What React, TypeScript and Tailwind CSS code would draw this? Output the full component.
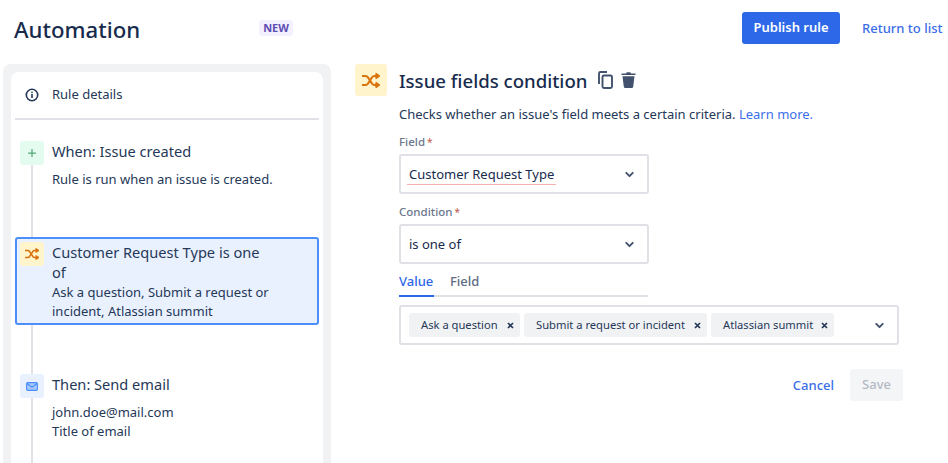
import type { ReactNode } from 'react';
import { Plus, ChevronDown } from 'lucide-react';

function ShuffleIcon({ width, height, strokeWidth }: { width: number; height: number; strokeWidth: number }) {
  return (
    <svg width={width} height={height} viewBox="0 0 18 15" fill="none" stroke="#d9730d" strokeWidth={strokeWidth} className="shrink-0">
      <path d="M0 3h3.5c1.2 0 1.9 0.6 2.5 1.4l4 6.2c0.6 0.8 1.3 1.4 2.5 1.4H17" />
      <path d="M0 12h3.5c1.2 0 1.9-0.6 2.5-1.4l4-6.2C10.6 3.6 11.3 3 12.5 3H17" />
      <path d="M13.5 0.5L17 3l-3.5 2.5M13.5 9.5L17 12l-3.5 2.5" />
    </svg>
  );
}

function InfoIcon() {
  return (
    <svg width={14} height={14} viewBox="0 0 14 14" className="shrink-0">
      <circle cx={7} cy={7} r={5.7} fill="none" stroke="#253858" strokeWidth={1.6} />
      <rect x={6.2} y={6} width={1.6} height={4} fill="#253858" />
      <rect x={6.2} y={3.6} width={1.6} height={1.6} rx={0.8} fill="#253858" />
    </svg>
  );
}

function MailIcon() {
  return (
    <svg width={12} height={9} viewBox="0 0 12 9">
      <rect x={0.6} y={0.6} width={10.8} height={7.8} rx={1.2} fill="#a9c8ff" stroke="#4c8ffa" strokeWidth={1.2} />
      <path d="M1 1.5l5 3.7 5-3.7" fill="none" stroke="#4c8ffa" strokeWidth={1.2} />
    </svg>
  );
}

function CopyIcon() {
  return (
    <svg width={15} height={18} viewBox="0 0 15 18" className="shrink-0">
      <path d="M1 13V2.5A1.5 1.5 0 0 1 2.5 1H9" fill="none" stroke="#42526e" strokeWidth={1.9} />
      <rect x={4.5} y={4.5} width={9.5} height={12.5} rx={1.5} fill="none" stroke="#42526e" strokeWidth={1.9} />
    </svg>
  );
}

function TrashIcon() {
  return (
    <svg width={15} height={16} viewBox="0 0 15 16" className="shrink-0">
      <path d="M0.5 1.5h4.5L5.8 0.3h3.4l0.8 1.2h4.5V3H0.5z" fill="#42526e" />
      <path d="M1.5 4.2h12l-1.3 10.5a1.5 1.5 0 0 1-1.5 1.3H4.3a1.5 1.5 0 0 1-1.5-1.3z" fill="#42526e" />
    </svg>
  );
}

function TagX() {
  return (
    <svg width={7} height={7} viewBox="0 0 7 7" className="shrink-0">
      <path d="M1 1l5 5M6 1L1 6" stroke="#253858" strokeWidth={1.7} />
    </svg>
  );
}

function Tag({ label, className }: { label: string; className: string }) {
  return (
    <div className={`flex items-center justify-between h-6 pl-3 pr-[6px] bg-[#f1f2f4] rounded-[3px] text-[11.2px] text-[#253858] ${className}`}>
      <span className="whitespace-nowrap">{label}</span>
      <TagX />
    </div>
  );
}

function FieldLabel({ children }: { children: ReactNode }) {
  return (
    <div className="h-4 flex items-center gap-0.5 text-[11.5px] font-medium text-[#6b778c]">
      {children}
      <span className="text-[10px] font-normal text-[#bf5a4a]">*</span>
    </div>
  );
}

function SelectBox({ children }: { children: ReactNode }) {
  return (
    <div className="flex items-center justify-between w-[250px] h-10 mt-1 pt-px pl-2 pr-[11px] border-2 border-[#dfe1e6] rounded-[3px] text-[13px] text-[#172b4d]">
      {children}
      <ChevronDown size={13} strokeWidth={3.5} className="text-[#42526e]" />
    </div>
  );
}

function StepIcon({ bg, children }: { bg: string; children: ReactNode }) {
  return <div className={`flex items-center justify-center w-6 h-6 rounded-[3px] shrink-0 ${bg}`}>{children}</div>;
}

export default function App() {
  return (
    <div className="flex flex-col w-[948px] h-[463px] overflow-hidden bg-white font-['Noto_Sans',sans-serif] text-[#172b4d]">
      <header className="flex items-center h-16 shrink-0 pl-[14px] pb-[8px]">
        <h1 className="w-[245px] mt-1 text-[22.2px] font-medium leading-7 text-[#172b4d]">Automation</h1>
        <span className="flex items-center justify-center w-[34px] h-4 rounded-[3px] bg-[#f3f0ff] text-[11px] font-bold text-[#5e4db2]">NEW</span>
        <button className="ml-[449px] w-[98px] h-8 rounded-[3px] bg-[#2d68e8] text-[13px] font-semibold text-white whitespace-nowrap">Publish rule</button>
        <a className="ml-[22px] pt-px text-[13px] font-medium text-[#3b6ee8] whitespace-nowrap">Return to list</a>
      </header>

      <main className="flex flex-1 min-h-0 pl-[3px]">
        <aside className="w-[328px] shrink-0 bg-[#f1f2f4] rounded-t-[8px] pt-2 px-2">
          <div className="relative h-full bg-white rounded-t-[8px] px-1 overflow-hidden">
            <div className="flex items-center gap-[13px] h-12 pl-[10px] border-b-2 border-[#dfe1e6] text-[13px] text-[#253858]">
              <InfoIcon />
              Rule details
            </div>

            <div className="absolute left-[20px] top-[92px] bottom-0 w-0.5 bg-[#dfe1e6]" />

            <div className="relative flex gap-2 pl-[5px] mt-[21px] h-[96px]">
              <StepIcon bg="bg-[#e3fcef]">
                <Plus size={12} strokeWidth={2.5} className="text-[#57a67e]" />
              </StepIcon>
              <div>
                <div className="text-[14.6px] leading-5 text-[#253858]">When: Issue created</div>
                <div className="mt-[9px] text-[13px] leading-[19px] text-[#253858]">Rule is run when an issue is created.</div>
              </div>
            </div>

            <div className="relative flex gap-2 h-[88px] pl-[3px] pt-[3px] border-2 border-[#4c8ffa] rounded-[3px] bg-[#e9f1ff]">
              <StepIcon bg="bg-[#fff4cc]">
                <ShuffleIcon width={14} height={12} strokeWidth={2} />
              </StepIcon>
              <div className="w-[222px] pt-px">
                <div className="text-[14.6px] leading-[19.5px] text-[#253858]">Customer Request Type is one of</div>
                <div className="mt-px text-[13px] leading-[19px] text-[#253858]">Ask a question, Submit a request or incident, Atlassian summit</div>
              </div>
            </div>

            <div className="relative flex gap-2 pl-[5px] mt-[49px]">
              <StepIcon bg="bg-[#e9f1ff]">
                <MailIcon />
              </StepIcon>
              <div>
                <div className="text-[14.6px] leading-5 text-[#253858]">Then: Send email</div>
                <div className="mt-[9px] text-[13px] leading-[19px] text-[#253858]">john.doe@mail.com</div>
                <div className="text-[13px] leading-[19px] text-[#253858]">Title of email</div>
              </div>
            </div>
          </div>
        </aside>

        <section className="flex-1 min-w-0 pl-6">
          <div className="flex items-center h-8">
            <div className="flex items-center justify-center w-8 h-8 mr-3 rounded-[3px] bg-[#fff4cc]">
              <ShuffleIcon width={18} height={15} strokeWidth={2} />
            </div>
            <h2 className="mt-0.5 mr-[11px] text-[18.6px] font-medium text-[#172b4d] whitespace-nowrap">Issue fields condition</h2>
            <CopyIcon />
            <div className="w-2" />
            <TrashIcon />
          </div>

          <div className="pl-11">
            <p className="mt-[9px] h-[18px] leading-[18px] text-[13px] text-[#253858] whitespace-nowrap">
              Checks whether an issue's field meets a certain criteria. <a className="text-[#3b6ee8]">Learn more.</a>
            </p>

            <div className="mt-[11px]">
              <FieldLabel>Field</FieldLabel>
              <SelectBox>
                <span className="-mx-0.5 px-0.5 border-b border-[#f4b0b0] leading-[19px]">Customer Request Type</span>
              </SelectBox>
            </div>

            <div className="mt-[10px]">
              <FieldLabel>Condition</FieldLabel>
              <SelectBox>is one of</SelectBox>
            </div>

            <div className="flex w-[249px] h-[33px] border-b-2 border-[#dfe1e6] text-[13px] font-medium">
              <div className="relative w-[35px] pt-2 text-[#2d68e8]">
                Value
                <div className="absolute left-0 right-0 -bottom-0.5 h-0.5 bg-[#2d68e8]" />
              </div>
              <div className="ml-[16px] pt-2 text-[#5e6c84]">Field</div>
            </div>

            <div className="flex items-center w-[500px] h-10 mt-2 pl-2 pr-[11px] border-2 border-[#dfe1e6] rounded-[3px]">
              <Tag label="Ask a question" className="w-[111px]" />
              <Tag label="Submit a request or incident" className="w-[183px] ml-1" />
              <Tag label="Atlassian summit" className="w-[123px] ml-1" />
              <ChevronDown size={13} strokeWidth={3.5} className="ml-auto text-[#42526e]" />
            </div>

            <div className="flex items-center justify-end w-[504px] mt-6 gap-4">
              <a className="pt-0.5 text-[13px] font-medium text-[#3b6ee8]">Cancel</a>
              <button className="w-[53px] h-8 rounded-[3px] bg-[#f4f5f7] text-[13px] font-medium text-[#b3b9c4]">Save</button>
            </div>
          </div>
        </section>
      </main>
    </div>
  );
}
